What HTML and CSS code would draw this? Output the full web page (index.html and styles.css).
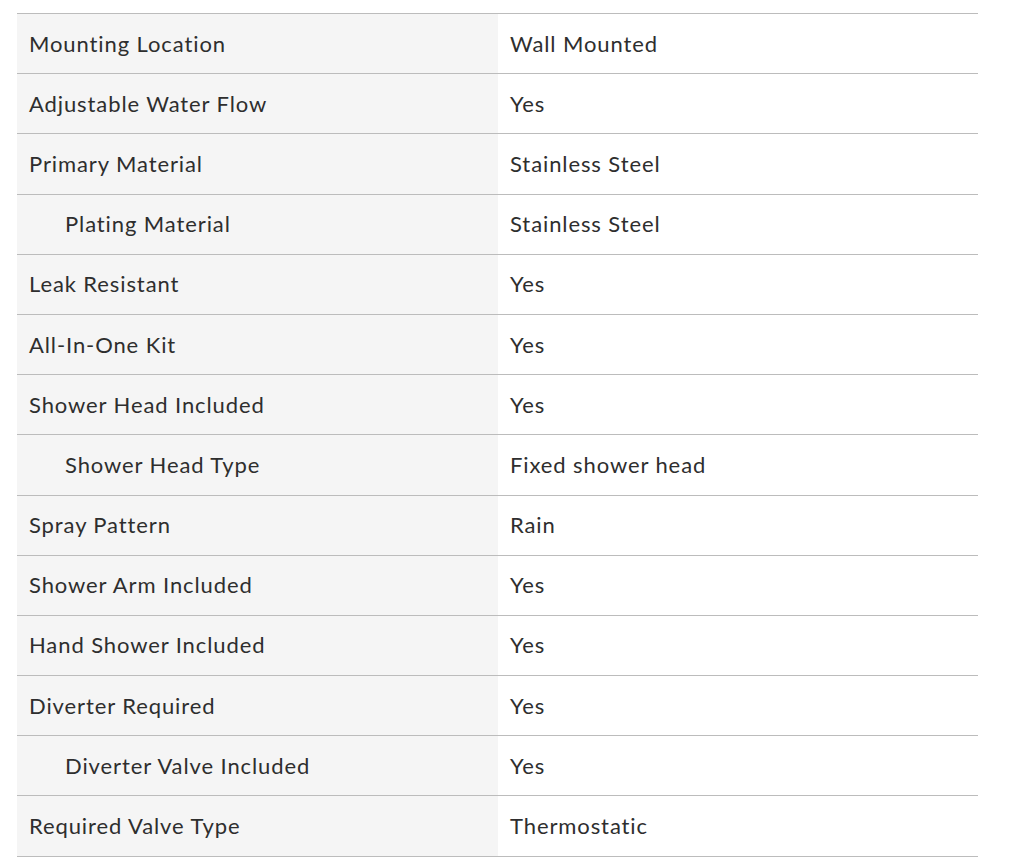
FILE: index.html
```html
<!DOCTYPE html>
<html lang="en">
<head>
<meta charset="utf-8">
<title>Specifications</title>
<link rel="stylesheet" href="styles.css">
</head>
<body>
<table class="specs">
  <tbody>
    <tr><th class="label">Mounting Location</th><td class="value">Wall Mounted</td></tr>
    <tr><th class="label">Adjustable Water Flow</th><td class="value">Yes</td></tr>
    <tr><th class="label">Primary Material</th><td class="value">Stainless Steel</td></tr>
    <tr><th class="label sub">Plating Material</th><td class="value">Stainless Steel</td></tr>
    <tr><th class="label">Leak Resistant</th><td class="value">Yes</td></tr>
    <tr><th class="label">All-In-One Kit</th><td class="value">Yes</td></tr>
    <tr><th class="label">Shower Head Included</th><td class="value">Yes</td></tr>
    <tr><th class="label sub">Shower Head Type</th><td class="value">Fixed shower head</td></tr>
    <tr><th class="label">Spray Pattern</th><td class="value">Rain</td></tr>
    <tr><th class="label">Shower Arm Included</th><td class="value">Yes</td></tr>
    <tr><th class="label">Hand Shower Included</th><td class="value">Yes</td></tr>
    <tr><th class="label">Diverter Required</th><td class="value">Yes</td></tr>
    <tr><th class="label sub">Diverter Valve Included</th><td class="value">Yes</td></tr>
    <tr><th class="label">Required Valve Type</th><td class="value">Thermostatic</td></tr>
  </tbody>
</table>
</body>
</html>
```

FILE: styles.css
```css
html, body {
  margin: 0;
  padding: 0;
  background: #ffffff;
}

body {
  padding: 13px 46px 0 17px;
  font-family: "Lato", "Liberation Sans", sans-serif;
  color: #2e2e2e;
}

.specs {
  width: 961px;
  border-collapse: collapse;
  table-layout: fixed;
  border-top: 1px solid #bcbcbc;
}

.specs tr {
  border-bottom: 1px solid #bcbcbc;
}

.label,
.value {
  height: 59.2px;
  padding: 0 12px;
  font-size: 22px;
  font-weight: 400;
  text-align: left;
  vertical-align: middle;
  line-height: 1;
  letter-spacing: 0.9px;
}

.label {
  width: 457px;
  background: #f5f5f5;
}

.label.sub {
  padding-left: 48px;
}

.value {
  background: #ffffff;
}
```
